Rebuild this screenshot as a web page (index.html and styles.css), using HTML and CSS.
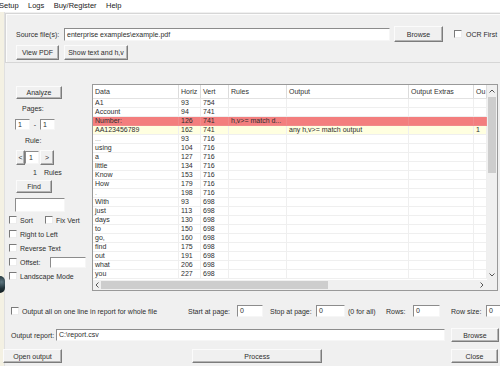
FILE: index.html
```html
<!DOCTYPE html>
<html>
<head>
<meta charset="utf-8">
<link rel="stylesheet" href="styles.css">
</head>
<body>
<div class="menubar"><span>Setup</span><span>Logs</span><span>Buy/Register</span><span>Help</span></div>

<div class="topbox">
  <div class="row1">
    <span class="srclabel">Source file(s):</span>
    <div class="tb src">enterprise examples\example.pdf</div>
    <button class="btn browse1">Browse</button>
    <span class="cb ocrcb"></span><span class="ocr">OCR First</span>
  </div>
  <div class="row2">
    <button class="btn viewpdf">View PDF</button>
    <button class="btn showtext">Show text and h,v</button>
  </div>
</div>

<div class="middle">
  <div class="leftpanel">
    <button class="btn analyze">Analyze</button>
    <div class="lbl pages">Pages:</div>
    <div class="pagerange"><div class="tb pg">1</div><span class="dash">-</span><div class="tb pg">1</div></div>
    <div class="lbl rule">Rule:</div>
    <div class="spinner"><button class="btn spl">&lt;</button><div class="tb spv">1</div><button class="btn spr">&gt;</button></div>
    <div class="rules"><span>1</span><span class="rulestxt">Rules</span></div>
    <button class="btn find">Find</button>
    <div class="tb findbox"></div>
    <div class="checks">
      <div class="ck"><span class="ckitem sortitem"><span class="cb"></span>Sort</span><span class="cb"></span>Fix Vert</div>
      <div class="ck"><span class="cb"></span>Right to Left</div>
      <div class="ck"><span class="cb"></span>Reverse Text</div>
      <div class="ck"><span class="cb"></span><span class="offlbl">Offset:</span><div class="tb offbox"></div></div>
      <div class="ck"><span class="cb"></span>Landscape Mode</div>
    </div>
  </div>

  <div class="table">
    <div class="data">
      <div class="th"><div>Data</div><div>Horiz</div><div>Vert</div><div>Rules</div><div>Output</div><div>Output Extras</div><div>Ou</div></div>
      <div class="tr"><div>A1</div><div>93</div><div>754</div><div></div><div></div><div></div><div></div></div>
      <div class="tr"><div>Account</div><div>94</div><div>741</div><div></div><div></div><div></div><div></div></div>
      <div class="tr red"><div>Number:</div><div>126</div><div>741</div><div>h,v&gt;= match d...</div><div></div><div></div><div></div></div>
      <div class="tr yellow"><div>AA123456789</div><div>162</div><div>741</div><div></div><div>any h,v&gt;= match output</div><div></div><div>1</div></div>
      <div class="tr"><div class="faint">...</div><div>93</div><div>716</div><div></div><div></div><div></div><div></div></div>
      <div class="tr"><div>using</div><div>104</div><div>716</div><div></div><div></div><div></div><div></div></div>
      <div class="tr"><div>a</div><div>127</div><div>716</div><div></div><div></div><div></div><div></div></div>
      <div class="tr"><div>little</div><div>134</div><div>716</div><div></div><div></div><div></div><div></div></div>
      <div class="tr"><div>Know</div><div>153</div><div>716</div><div></div><div></div><div></div><div></div></div>
      <div class="tr"><div>How</div><div>179</div><div>716</div><div></div><div></div><div></div><div></div></div>
      <div class="tr"><div class="faint">.</div><div>198</div><div>716</div><div></div><div></div><div></div><div></div></div>
      <div class="tr"><div>With</div><div>93</div><div>698</div><div></div><div></div><div></div><div></div></div>
      <div class="tr"><div>just</div><div>113</div><div>698</div><div></div><div></div><div></div><div></div></div>
      <div class="tr"><div>days</div><div>130</div><div>698</div><div></div><div></div><div></div><div></div></div>
      <div class="tr"><div>to</div><div>150</div><div>698</div><div></div><div></div><div></div><div></div></div>
      <div class="tr"><div>go,</div><div>160</div><div>698</div><div></div><div></div><div></div><div></div></div>
      <div class="tr"><div>find</div><div>175</div><div>698</div><div></div><div></div><div></div><div></div></div>
      <div class="tr"><div>out</div><div>191</div><div>698</div><div></div><div></div><div></div><div></div></div>
      <div class="tr"><div>what</div><div>206</div><div>698</div><div></div><div></div><div></div><div></div></div>
      <div class="tr"><div>you</div><div>227</div><div>698</div><div></div><div></div><div></div><div></div></div>
    </div>
    <div class="vscroll">
      <div class="sbtn vup"><svg width="6" height="4" viewBox="0 0 6 4"><polyline points="0.5,3.5 3,1 5.5,3.5" fill="none" stroke="#555" stroke-width="1"/></svg></div>
      <div class="vthumb"></div>
      <div class="sfill"></div>
      <div class="sbtn vdown"><svg width="6" height="4" viewBox="0 0 6 4"><polyline points="0.5,0.5 3,3 5.5,0.5" fill="none" stroke="#555" stroke-width="1"/></svg></div>
    </div>
    <div class="hscroll">
      <div class="sbtn hleft"><svg width="4" height="6" viewBox="0 0 4 6"><polyline points="3.5,0.5 1,3 3.5,5.5" fill="none" stroke="#555" stroke-width="1"/></svg></div>
      <div class="hthumb"></div>
      <div class="sfill"></div>
      <div class="sbtn hright"><svg width="4" height="6" viewBox="0 0 4 6"><polyline points="0.5,0.5 3,3 0.5,5.5" fill="none" stroke="#555" stroke-width="1"/></svg></div>
    </div>
    <div class="corner"></div>
  </div>
</div>

<div class="rowA">
  <span class="oa"><span class="cb"></span><span class="oatext">Output all on one line in report for whole file</span></span>
  <span class="l-start">Start at page:</span><div class="tb in-start">0</div>
  <span class="l-stop">Stop at page:</span><div class="tb in-stop">0</div>
  <span class="l-all">(0 for all)</span>
  <span class="l-rows">Rows:</span><div class="tb in-rows">0</div>
  <span class="l-rowsize">Row size:</span><div class="tb in-rowsize">0</div>
</div>

<div class="rowB">
  <span class="l-report">Output report:</span>
  <div class="tb in-report">C:\report.csv</div>
  <button class="btn browse2">Browse</button>
</div>

<div class="rowC">
  <button class="btn openout">Open output</button>
  <button class="btn process">Process</button>
  <button class="btn close">Close</button>
</div>

<div class="deskicon"></div>
</body>
</html>
```

FILE: styles.css
```css
* { box-sizing: border-box; }

body {
  margin: 0;
  width: 500px;
  height: 366px;
  overflow: hidden;
  position: relative;
  background: linear-gradient(to right, #f4f1e3 0, #f4f1e3 4px, #e0e0e0 4px, #e0e0e0 5px, #f0f0f0 5px);
  font-family: "Liberation Sans", Arial, sans-serif;
  font-size: 7px;
  color: #2e2e2e;
}

button {
  font: inherit;
  color: inherit;
  margin: 0;
  padding: 0;
}

/* menu */
.menubar {
  height: 12px;
  line-height: 12px;
  background: #fff;
  display: flex;
  gap: 9.4px;
  margin-left: -1px;
  font-size: 7.5px;
  color: #1a1a1a;
}

/* generic controls */
.btn {
  display: block;
  background: #f0f0f0;
  border: 1px solid;
  border-color: #fbfbfb #7c7c7c #7c7c7c #fbfbfb;
  box-shadow: inset -1px -1px #b4b4b4;
  text-align: center;
  line-height: 1;
}

.tb {
  background: #fff;
  border: 1px solid;
  border-color: #8c8c8c #f6f6f6 #f6f6f6 #8c8c8c;
  padding-left: 2px;
  white-space: nowrap;
  overflow: hidden;
}

.cb {
  display: inline-block;
  width: 8px;
  height: 8px;
  background: #fff;
  border: 1px solid;
  border-color: #7a7a7a #ececec #ececec #7a7a7a;
  flex: none;
}

/* top box */
.topbox {
  margin: 1px 0 0 5px;
  width: 500px;
  height: 50px;
  border: 1px solid #d6d6d6;
  box-shadow: inset 1px 1px #fcfcfc;
  padding: 12px 0 0 10px;
}

.row1 {
  display: flex;
  align-items: center;
  height: 16px;
}

.srclabel { width: 48px; }

.src {
  width: 326px;
  height: 13px;
  line-height: 11px;
}

.browse1 {
  margin-left: 4px;
  width: 49px;
  height: 16px;
}

.ocrcb { margin-left: 11px; }
.ocr { margin-left: 4px; }

.row2 {
  display: flex;
  margin-top: 3px;
  height: 15px;
}

.viewpdf { width: 43px; height: 15px; }
.showtext { margin-left: 5px; width: 64px; height: 15px; }

/* middle */
.middle {
  display: flex;
  padding-left: 5px;
}

.leftpanel {
  width: 87px;
  display: flex;
  flex-direction: column;
  align-items: flex-start;
}

.analyze {
  margin: 23px 0 0 11px;
  width: 46px;
  height: 13px;
}

.lbl {
  height: 9px;
  line-height: 9px;
}

.pages { margin: 5px 0 0 17px; }

.pagerange {
  display: flex;
  margin: 6px 0 0 10px;
  height: 11px;
}

.pg {
  width: 15px;
  height: 11px;
  line-height: 9px;
}

.dash {
  width: 10px;
  text-align: center;
  line-height: 11px;
}

.rule { margin: 6px 0 0 20px; }

.spinner {
  display: flex;
  align-items: center;
  margin: 5px 0 0 11px;
  height: 15px;
}

.spl { width: 9px; height: 15px; }
.spv { width: 14px; height: 13px; line-height: 11px; padding-left: 3px; }
.spr { width: 14px; height: 15px; margin-left: 1px; }

.rules {
  display: flex;
  margin: 3px 0 0 28px;
  height: 9px;
  line-height: 9px;
}

.rulestxt { margin-left: 7px; }

.find {
  margin: 3px 0 0 11px;
  width: 36px;
  height: 13px;
}

.findbox {
  margin: 5px 0 0 10px;
  width: 50px;
  height: 14px;
}

.checks {
  margin-top: 1px;
  display: flex;
  flex-direction: column;
}

.ck {
  display: flex;
  align-items: center;
  height: 14px;
  padding-left: 4px;
}

.ck .cb { margin-right: 3px; }

.ckitem {
  display: flex;
  align-items: center;
}

.sortitem { width: 36px; }

.offlbl { width: 30px; }

.offbox {
  width: 36px;
  height: 11px;
}

/* table */
.table {
  margin-top: 21px;
  width: 406px;
  height: 207px;
  border: 1px solid #999;
  background: #fff;
  display: grid;
  grid-template-columns: 394px 10px;
  grid-template-rows: 195px 10px;
}

.data { overflow: hidden; }

.th, .tr {
  display: grid;
  grid-template-columns: 86px 22px 28px 58px 122px 65px 13px;
}

.th {
  height: 14px;
  line-height: 13px;
  border-bottom: 1px solid #e2e2e2;
  color: #333;
}

.th > div {
  border-right: 1px solid #dcdcdc;
  padding-left: 2px;
  white-space: nowrap;
  overflow: hidden;
}

.tr {
  height: 9px;
  line-height: 8px;
}

.tr > div {
  border-right: 1px solid #efefef;
  border-bottom: 1px solid #efefef;
  padding-left: 2px;
  white-space: nowrap;
  overflow: hidden;
}

.tr.red { background: #f37e7e; }
.tr.red > div { border-color: #f08a8a; }
.tr.yellow { background: #ffffe0; }

.faint { color: #8c8c8c; }

.vscroll {
  background: #f0f0f0;
  display: flex;
  flex-direction: column;
}

.sbtn {
  display: flex;
  align-items: center;
  justify-content: center;
  flex: none;
}

.vup { height: 11px; }
.vdown { height: 10px; }

.vthumb {
  margin: 1px 1px 0 1px;
  height: 76px;
  background: #cdcdcd;
  flex: none;
}

.sfill { flex: 1; }

.hscroll {
  background: #f0f0f0;
  display: flex;
}

.hleft { width: 8px; }
.hright { width: 10px; }

.hthumb {
  width: 227px;
  margin: 1px 0;
  background: #cdcdcd;
  flex: none;
}

.corner { background: #f0f0f0; }

/* bottom rows */
.rowA {
  display: flex;
  align-items: center;
  margin-top: 14px;
  height: 12px;
  padding-left: 11px;
  white-space: nowrap;
}

.oa {
  display: flex;
  align-items: center;
  width: 177px;
  flex: none;
}

.oatext { margin-left: 3px; }

.rowA .tb {
  height: 12px;
  line-height: 10px;
  flex: none;
}

.l-start { width: 49px; flex: none; }
.in-start { width: 26px; }
.l-stop { margin-left: 7px; width: 46px; flex: none; }
.in-stop { width: 29px; }
.l-all { margin-left: 3px; width: 38px; flex: none; }
.l-rows { width: 27px; flex: none; }
.in-rows { width: 27px; }
.l-rowsize { margin-left: 11px; width: 35px; flex: none; }
.in-rowsize { width: 24px; }

.rowB {
  display: flex;
  align-items: center;
  margin-top: 11px;
  height: 14px;
  padding-left: 11px;
}

.l-report { width: 45px; flex: none; white-space: nowrap; }

.in-report {
  width: 389px;
  height: 12px;
  line-height: 10px;
}

.browse2 {
  margin-left: 6px;
  width: 48px;
  height: 14px;
}

.rowC {
  display: flex;
  margin-top: 7px;
  height: 14px;
  padding-left: 3px;
}

.openout { width: 59px; height: 14px; }
.process { margin-left: 130px; width: 130px; height: 14px; }
.close { margin-left: 129px; width: 47px; height: 14px; }

/* desktop icon fragment peeking at the left edge */
.deskicon {
  position: absolute;
  left: 0;
  top: 276px;
  width: 5px;
  height: 17px;
  border-radius: 0 6px 6px 0;
  background: radial-gradient(circle at 30% 35%, #5d7680 0, #22343a 55%, #111a1d 100%);
}
```
